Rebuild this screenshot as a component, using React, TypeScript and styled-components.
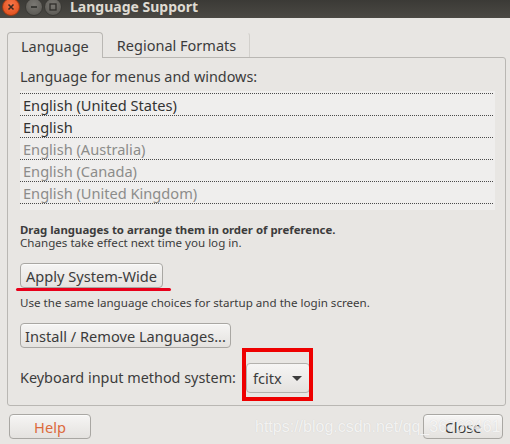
import React from 'react';
import styled, { createGlobalStyle } from 'styled-components';

const GlobalStyle = createGlobalStyle`
  html, body {
    margin: 0;
    padding: 0;
    background: #e8e6e3;
  }
  body {
    font-family: 'Noto Sans', 'DejaVu Sans', sans-serif;
    color: #3c3c3c;
  }
`;

const Window = styled.div`
  width: 510px;
  height: 444px;
  overflow: hidden;
  display: flex;
  flex-direction: column;
  background: #e8e6e3;
`;

const TitleBar = styled.div`
  height: 18px;
  flex: none;
  display: flex;
  align-items: flex-start;
  background: linear-gradient(#3b3a36, #4b4944);
  overflow: hidden;
`;

const WinButtons = styled.div`
  display: flex;
  gap: 1px;
  margin: -2px 0 0 2px;
`;

const WinButton = styled.div<{ $close?: boolean }>`
  width: 16px;
  height: 16px;
  border-radius: 50%;
  display: flex;
  align-items: center;
  justify-content: center;
  margin-right: ${(p) => (p.$close ? '4px' : '0')};
  background: ${(p) =>
    p.$close
      ? 'radial-gradient(circle at 50% 35%, #f7774a, #dd4814)'
      : 'radial-gradient(circle at 50% 35%, #7a7873, #55534e)'};
  border: 1px solid ${(p) => (p.$close ? '#9c3a14' : '#3a3935')};
`;

const Title = styled.div`
  margin-left: 8px;
  margin-top: -1px;
  font-size: 14px;
  font-weight: bold;
  color: #dfdbd2;
  line-height: 16px;
  white-space: nowrap;
`;

const Body = styled.div`
  flex: 1;
  display: flex;
  flex-direction: column;
  padding: 14px 4px 0 7px;
  position: relative;
`;

const Tabs = styled.div`
  display: flex;
  height: 25px;
  position: relative;
  z-index: 1;
`;

const Tab = styled.div<{ $active?: boolean }>`
  box-sizing: border-box;
  display: flex;
  align-items: center;
  font-size: 14.5px;
  padding: 0 13px;
  background: #e8e6e3;
  border: 1px solid ${(p) => (p.$active ? '#b9b7b3' : 'transparent')};
  border-bottom: none;
  border-right-color: ${(p) => (p.$active ? '#b9b7b3' : '#d2d0cc')};
  border-radius: 4px 4px 0 0;
  height: ${(p) => (p.$active ? '26px' : '25px')};
  margin-bottom: ${(p) => (p.$active ? '-1px' : '0')};
  color: #3c3c3c;
  white-space: nowrap;
`;

const Panel = styled.div`
  border: 1px solid #b9b7b3;
  border-radius: 0 3px 3px 3px;
  padding: 10px 10px 12px 12px;
  display: flex;
  flex-direction: column;
  align-items: flex-start;
`;

const Label = styled.div<{ $size?: number }>`
  font-size: ${(p) => p.$size ?? 14.4}px;
  line-height: 18px;
  white-space: nowrap;
`;

const LangList = styled.div`
  align-self: stretch;
  margin-top: 5px;
  padding: 2px 2px 6px 0;
  background: #efeeed;
`;

const LangRow = styled.div<{ $dim?: boolean }>`
  height: 21px;
  display: flex;
  align-items: center;
  padding-left: 3px;
  font-size: 14.6px;
  color: ${(p) => (p.$dim ? '#8c8c8a' : '#333333')};
  border-bottom: 1px dotted #4a4a4a;
  &:first-child {
    border-top: 1px dotted #4a4a4a;
  }
`;

const Hint = styled.div<{ $bold?: boolean; $gap?: number }>`
  font-size: ${(p) => (p.$bold ? 11.4 : 11.6)}px;
  line-height: 13px;
  font-weight: ${(p) => (p.$bold ? 'bold' : 'normal')};
  margin-top: ${(p) => p.$gap ?? 0}px;
  white-space: nowrap;
`;

const ButtonSlot = styled.div<{ $gap: number }>`
  position: relative;
  margin-top: ${(p) => p.$gap}px;
`;

const Button = styled.button<{ $width?: number; $help?: boolean }>`
  height: 25px;
  box-sizing: border-box;
  width: ${(p) => (p.$width ? `${p.$width}px` : 'auto')};
  padding: 0 6px;
  font-family: inherit;
  font-size: 14.6px;
  color: ${(p) => (p.$help ? '#dc6a3c' : '#3c3c3c')};
  background: linear-gradient(#f6f5f4, #e4e2df);
  border: 1px solid #a9a7a3;
  border-radius: 4px;
  box-shadow: inset 0 1px 0 #fbfbfa;
  display: flex;
  align-items: center;
  justify-content: center;
  white-space: nowrap;
`;

const RedUnderline = styled.div`
  position: absolute;
  left: -4px;
  right: -8px;
  bottom: -3px;
  height: 3px;
  border-radius: 2px;
  background: #e8001a;
`;

const KeyboardRow = styled.div`
  margin-top: 15px;
  display: flex;
  align-items: center;
  gap: 10px;
`;

const Combo = styled.div`
  position: relative;
  height: 30px;
  width: 64px;
  box-sizing: border-box;
  display: flex;
  align-items: center;
  gap: 10px;
  padding-left: 6px;
  font-size: 14.6px;
  background: linear-gradient(#f6f5f4, #e4e2df);
  border: 1px solid #b3b1ad;
  border-radius: 4px;
`;

const Arrow = styled.span`
  width: 0;
  height: 0;
  border-left: 5px solid transparent;
  border-right: 5px solid transparent;
  border-top: 5px solid #3c3c3c;
`;

const RedBox = styled.div`
  position: absolute;
  left: -5px;
  top: -16px;
  right: -4px;
  bottom: -9px;
  border: 4px solid #ee0000;
`;

const Footer = styled.div`
  margin-top: 8px;
  display: flex;
  justify-content: space-between;
  padding: 0 3px 0 2px;
  position: relative;
`;

const Watermark = styled.div`
  position: absolute;
  left: 248px;
  top: 4px;
  font-family: 'Liberation Sans', Arial, sans-serif;
  font-size: 16px;
  color: rgba(250, 250, 250, 0.85);
  text-shadow: 0 0 1px rgba(0, 0, 0, 0.12);
  pointer-events: none;
  white-space: nowrap;
`;

const languages = [
  { name: 'English (United States)', dim: false },
  { name: 'English', dim: false },
  { name: 'English (Australia)', dim: true },
  { name: 'English (Canada)', dim: true },
  { name: 'English (United Kingdom)', dim: true },
];

const CloseGlyph = () => (
  <svg width="8" height="8" viewBox="0 0 8 8">
    <path d="M1.5 1.5 L6.5 6.5 M6.5 1.5 L1.5 6.5" stroke="#3a2a22" strokeWidth="1.6" />
  </svg>
);

const MinGlyph = () => (
  <svg width="8" height="8" viewBox="0 0 8 8">
    <path d="M1 4 H7" stroke="#2e2d2a" strokeWidth="1.6" />
  </svg>
);

const MaxGlyph = () => (
  <svg width="8" height="8" viewBox="0 0 8 8">
    <rect x="1" y="1" width="6" height="6" fill="none" stroke="#2e2d2a" strokeWidth="1.3" />
  </svg>
);

const App: React.FC = () => {
  return (
    <Window>
      <GlobalStyle />
      <TitleBar>
        <WinButtons>
          <WinButton $close><CloseGlyph /></WinButton>
          <WinButton><MinGlyph /></WinButton>
          <WinButton><MaxGlyph /></WinButton>
        </WinButtons>
        <Title>Language Support</Title>
      </TitleBar>

      <Body>
        <Tabs>
          <Tab $active>Language</Tab>
          <Tab>Regional Formats</Tab>
        </Tabs>

        <Panel>
          <Label>Language for menus and windows:</Label>
          <LangList>
            {languages.map((l) => (
              <LangRow key={l.name} $dim={l.dim}>{l.name}</LangRow>
            ))}
          </LangList>

          <Hint $bold $gap={13}>Drag languages to arrange them in order of preference.</Hint>
          <Hint>Changes take effect next time you log in.</Hint>

          <ButtonSlot $gap={14}>
            <Button $width={143}>Apply System-Wide</Button>
            <RedUnderline />
          </ButtonSlot>

          <Hint $gap={8}>Use the same language choices for startup and the login screen.</Hint>

          <ButtonSlot $gap={14}>
            <Button $width={211}>Install / Remove Languages...</Button>
          </ButtonSlot>

          <KeyboardRow>
            <Label $size={14.4}>Keyboard input method system:</Label>
            <Combo>
              fcitx <Arrow />
              <RedBox />
            </Combo>
          </KeyboardRow>
        </Panel>

        <Footer>
          <Button $width={82} $help>Help</Button>
          <Button $width={80}>Close</Button>
          <Watermark>https://blog.csdn.net/qq_36763461</Watermark>
        </Footer>
      </Body>
    </Window>
  );
};

export default App;
